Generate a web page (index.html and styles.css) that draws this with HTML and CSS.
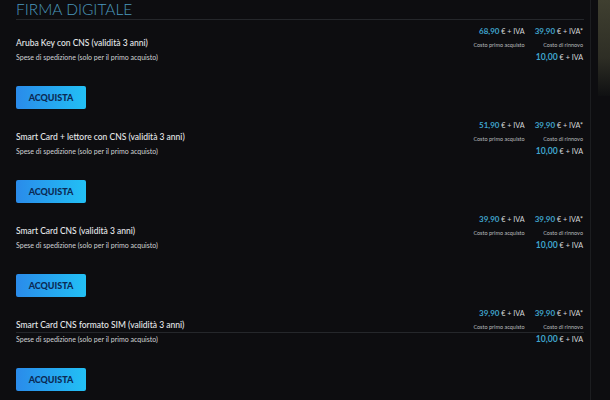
FILE: index.html
```html
<!DOCTYPE html>
<html lang="it">
<head>
<meta charset="utf-8">
<title>Firma digitale</title>
<link rel="stylesheet" href="styles.css">
</head>
<body>
<div class="page">
  <main class="content">
    <h1 class="title">FIRMA DIGITALE</h1>
    <section class="item">
      <div class="row row-main">
        <div class="name">Aruba Key con CNS (validità 3 anni)</div>
        <div class="prices">
          <div class="price"><div class="amount"><b>68,90</b> € + IVA</div><div class="note">Costo primo acquisto</div></div>
          <div class="price"><div class="amount"><b>39,90</b> € + IVA*</div><div class="note">Costo di rinnovo</div></div>
        </div>
      </div>
      <div class="row row-ship">
        <div class="ship">Spese di spedizione (solo per il primo acquisto)</div>
        <div class="amount"><b>10,00</b> € + IVA</div>
      </div>
      <a class="buy">ACQUISTA</a>
    </section>
    <section class="item">
      <div class="row row-main">
        <div class="name">Smart Card + lettore con CNS (validità 3 anni)</div>
        <div class="prices">
          <div class="price"><div class="amount"><b>51,90</b> € + IVA</div><div class="note">Costo primo acquisto</div></div>
          <div class="price"><div class="amount"><b>39,90</b> € + IVA*</div><div class="note">Costo di rinnovo</div></div>
        </div>
      </div>
      <div class="row row-ship">
        <div class="ship">Spese di spedizione (solo per il primo acquisto)</div>
        <div class="amount"><b>10,00</b> € + IVA</div>
      </div>
      <a class="buy">ACQUISTA</a>
    </section>
    <section class="item">
      <div class="row row-main">
        <div class="name">Smart Card CNS (validità 3 anni)</div>
        <div class="prices">
          <div class="price"><div class="amount"><b>39,90</b> € + IVA</div><div class="note">Costo primo acquisto</div></div>
          <div class="price"><div class="amount"><b>39,90</b> € + IVA*</div><div class="note">Costo di rinnovo</div></div>
        </div>
      </div>
      <div class="row row-ship">
        <div class="ship">Spese di spedizione (solo per il primo acquisto)</div>
        <div class="amount"><b>10,00</b> € + IVA</div>
      </div>
      <a class="buy">ACQUISTA</a>
    </section>
    <section class="item item-ruled">
      <div class="row row-main">
        <div class="name">Smart Card CNS formato SIM (validità 3 anni)</div>
        <div class="prices">
          <div class="price"><div class="amount"><b>39,90</b> € + IVA</div><div class="note">Costo primo acquisto</div></div>
          <div class="price"><div class="amount"><b>39,90</b> € + IVA*</div><div class="note">Costo di rinnovo</div></div>
        </div>
      </div>
      <div class="row row-ship">
        <div class="ship">Spese di spedizione (solo per il primo acquisto)</div>
        <div class="amount"><b>10,00</b> € + IVA</div>
      </div>
      <a class="buy">ACQUISTA</a>
    </section>
  </main>
  <aside class="edge"></aside>
</div>
</body>
</html>
```
FILE: styles.css
```css
html, body {
  margin: 0;
  height: 100%;
  overflow: hidden;
  background: #0d0d10;
}
.page {
  display: flex;
  height: 400px;
  font-family: Lato, "Liberation Sans", sans-serif;
  color: #e6e8ea;
}
.content {
  width: 584px;
  padding-left: 16px;
  box-sizing: border-box;
  margin-right: 6px;
  overflow: hidden;
}
.edge {
  width: 20px;
  flex: none;
  box-sizing: border-box;
  border-left: 1px solid #1c1d20;
  background: #0d0d10;
  position: relative;
}
.edge::after {
  content: "";
  position: absolute;
  top: 0;
  right: 0;
  width: 12px;
  height: 96px;
  background: linear-gradient(to bottom, #3f3f30, #2e2e25 60%, #0f1012);
}
.title {
  margin: 0;
  height: 19px;
  font-size: 15.5px;
  line-height: 19px;
  font-weight: 300;
  color: #4b98bd;
  border-bottom: 1px solid #25272b;
}
.item {
  height: 94px;
}
.row {
  display: flex;
  justify-content: space-between;
  align-items: flex-start;
  padding-right: 1px;
}
.row-main {
  box-sizing: border-box;
  height: 31px;
  padding-top: 5px;
}
.name {
  font-size: 8.5px;
  font-weight: 500;
  line-height: 12px;
  margin-top: 12px;
}
.prices {
  display: flex;
  gap: 10px;
}
.price {
  text-align: right;
}
.amount {
  font-size: 7.2px;
  line-height: 12px;
  color: #d5d8da;
}
.amount b {
  color: #3fa3cc;
  font-size: 8px;
  font-weight: 700;
}
.note {
  font-size: 5.5px;
  line-height: 10px;
  margin-top: 2px;
  color: #b9bcbf;
}
.row-ship {
  box-sizing: border-box;
  height: 35px;
}
.row-ship .amount b {
  font-size: 8.6px;
}
.ship {
  font-size: 7px;
  line-height: 12px;
  color: #d0d2d4;
}
.buy {
  display: block;
  width: 70px;
  height: 23px;
  border-radius: 2px;
  background: linear-gradient(to right, #2a8bea, #22c0f5);
  color: #0b2a55;
  font-size: 9px;
  font-weight: 900;
  line-height: 23px;
  text-align: center;
}
.item-ruled .row-main {
  border-bottom: 1px solid #25272b;
}
```
